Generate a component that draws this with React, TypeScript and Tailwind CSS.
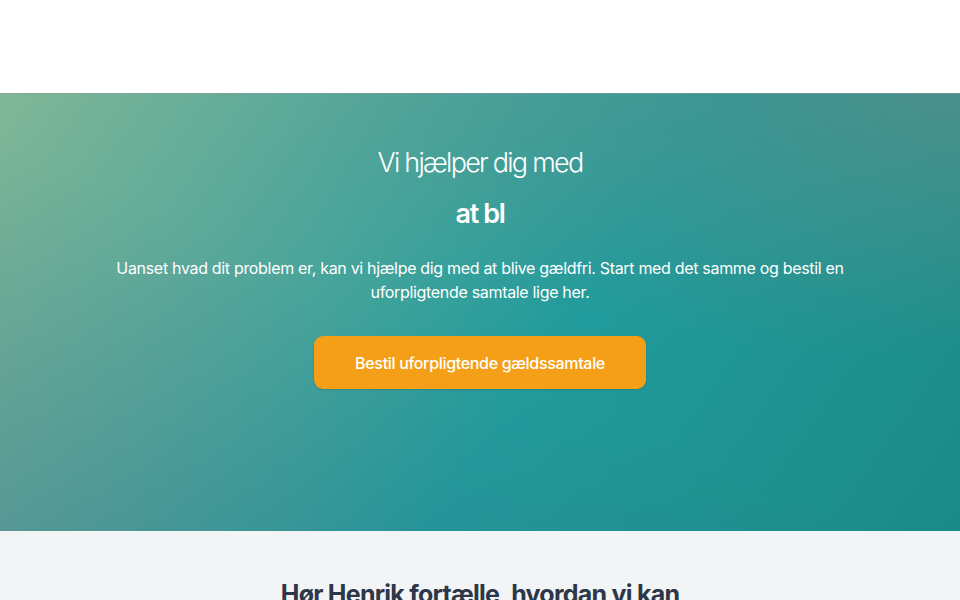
import React from "react";

export default function App() {
  return (
    <div className="w-full min-h-[600px] bg-white font-['Inter',sans-serif]">
      <header className="h-[93px] bg-white" />
      <section className="relative h-[438px] overflow-hidden bg-[linear-gradient(125deg,#80b797_0%,#55a79a_28%,#219b9c_58%,#1b8a86_100%)]">
        <div className="absolute inset-0 bg-[radial-gradient(ellipse_70%_60%_at_100%_0%,rgba(110,140,130,0.55)_0%,rgba(110,140,130,0)_100%)]" />
        <div className="absolute inset-0 bg-[linear-gradient(to_top_right,rgba(70,90,130,0.22)_0%,rgba(70,90,130,0)_45%)]" />
        <div className="absolute inset-x-0 top-0 h-px bg-[#8a9a96]/60" />
        <div className="relative flex flex-col items-center pt-[47px] text-white">
          <h1 className="text-[27px] leading-[46px] font-light tracking-[-0.065em]">Vi hjælper dig med</h1>
          <h2 className="mt-[5px] text-[27px] leading-[46px] font-semibold tracking-[-0.05em]">at bl</h2>
          <p className="mt-[19px] w-[740px] text-center text-[16px] leading-[24px] tracking-[-0.02em]">
            Uanset hvad dit problem er, kan vi hjælpe dig med at blive gældfri. Start med det samme og bestil en uforpligtende samtale lige her.
          </p>
          <button className="mt-[32px] h-[53px] w-[332px] rounded-[9px] bg-[#f59f18] text-[16px] font-medium tracking-[-0.02em] text-white shadow-sm">
            Bestil uforpligtende gældssamtale
          </button>
        </div>
      </section>
      <section className="h-[69px] overflow-hidden bg-[#f3f4f6]">
        <h3 className="pt-[47px] text-center text-[25px] leading-[32px] font-bold tracking-[-0.03em] text-[#2d3748]">
          Hør Henrik fortælle, hvordan vi kan
        </h3>
      </section>
    </div>
  );
}
